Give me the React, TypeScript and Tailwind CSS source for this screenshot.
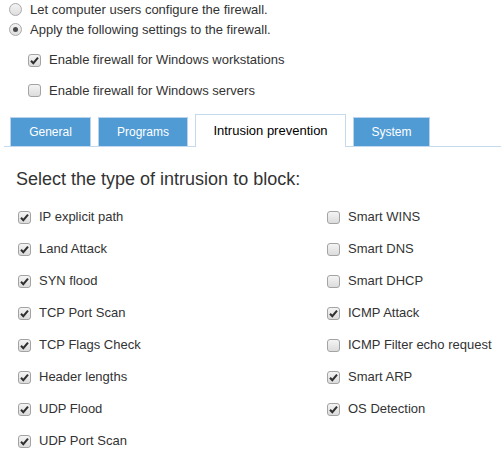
import React from "react";

const left = [
  "IP explicit path",
  "Land Attack",
  "SYN flood",
  "TCP Port Scan",
  "TCP Flags Check",
  "Header lengths",
  "UDP Flood",
  "UDP Port Scan",
];

const right: [string, boolean][] = [
  ["Smart WINS", false],
  ["Smart DNS", false],
  ["Smart DHCP", false],
  ["ICMP Attack", true],
  ["ICMP Filter echo request", false],
  ["Smart ARP", true],
  ["OS Detection", true],
];

function Box({ checked }: { checked: boolean }) {
  return (
    <span className="w-[13px] h-[13px] shrink-0 rounded-[3px] border border-[#a3a3a3] bg-gradient-to-b from-[#f4f4f4] to-[#dcdcdc] flex items-center justify-center">
      {checked && (
        <svg width="11" height="11" viewBox="0 0 11 11">
          <path d="M2 5.8 L4.3 8.2 L9 2.6" fill="none" stroke="#2f2f2f" strokeWidth="2" />
        </svg>
      )}
    </span>
  );
}

function Radio({ checked }: { checked: boolean }) {
  return (
    <span className="w-[13px] h-[13px] shrink-0 rounded-full border border-[#a9a9a9] bg-gradient-to-b from-[#f3f3f3] to-[#dedede] flex items-center justify-center">
      {checked && <span className="w-[5px] h-[5px] rounded-full bg-[#4a4a4a]" />}
    </span>
  );
}

function Tab({ label, width, active }: { label: string; width: string; active?: boolean }) {
  if (active) {
    return (
      <div className={`${width} h-[33px] -mb-px bg-white border border-b-0 border-[#c4d9ee] flex items-center justify-center text-[13px] text-black`}>
        {label}
      </div>
    );
  }
  return (
    <div className={`${width} h-[29px] bg-[#509bd3] border border-b-0 border-[#b9d3ec] flex items-center justify-center text-[12px] text-white`}>
      {label}
    </div>
  );
}

export default function App() {
  return (
    <div className="w-[501px] h-[458px] overflow-hidden bg-white text-[#333] font-['Liberation_Sans',Arial,sans-serif]">
      <div className="flex items-center h-[19px] pl-[9px] gap-[8px] text-[13px]">
        <Radio checked={false} />
        <span>Let computer users configure the firewall.</span>
      </div>
      <div className="flex items-center h-[21px] pl-[9px] gap-[8px] text-[13px]">
        <Radio checked />
        <span>Apply the following settings to the firewall.</span>
      </div>
      <div className="flex items-center h-[30px] mt-[5px] pl-[28px] gap-[8px] text-[13px]">
        <Box checked />
        <span>Enable firewall for Windows workstations</span>
      </div>
      <div className="flex items-center h-[31px] pl-[28px] gap-[8px] text-[13px]">
        <Box checked={false} />
        <span>Enable firewall for Windows servers</span>
      </div>

      <div className="mt-[8px] ml-[4px] h-[33px] border-b border-[#c4d9ee] flex items-end gap-[7px] pl-[6px]">
        <Tab label="General" width="w-[81px]" />
        <Tab label="Programs" width="w-[90px]" />
        <Tab label="Intrusion prevention" width="w-[151px]" active />
        <Tab label="System" width="w-[77px]" />
      </div>

      <h2 className="mt-[22px] pl-[16px] text-[18px] leading-[21px]">Select the type of intrusion to block:</h2>

      <div className="mt-[11px] pl-[18px] grid grid-cols-[309px_1fr] text-[13px]">
        <div className="flex flex-col">
          {left.map((l) => (
            <div key={l} className="h-[32px] flex items-center gap-[8px]">
              <Box checked />
              <span>{l}</span>
            </div>
          ))}
        </div>
        <div className="flex flex-col">
          {right.map(([l, c]) => (
            <div key={l} className="h-[32px] flex items-center gap-[8px]">
              <Box checked={c} />
              <span>{l}</span>
            </div>
          ))}
        </div>
      </div>
    </div>
  );
}
